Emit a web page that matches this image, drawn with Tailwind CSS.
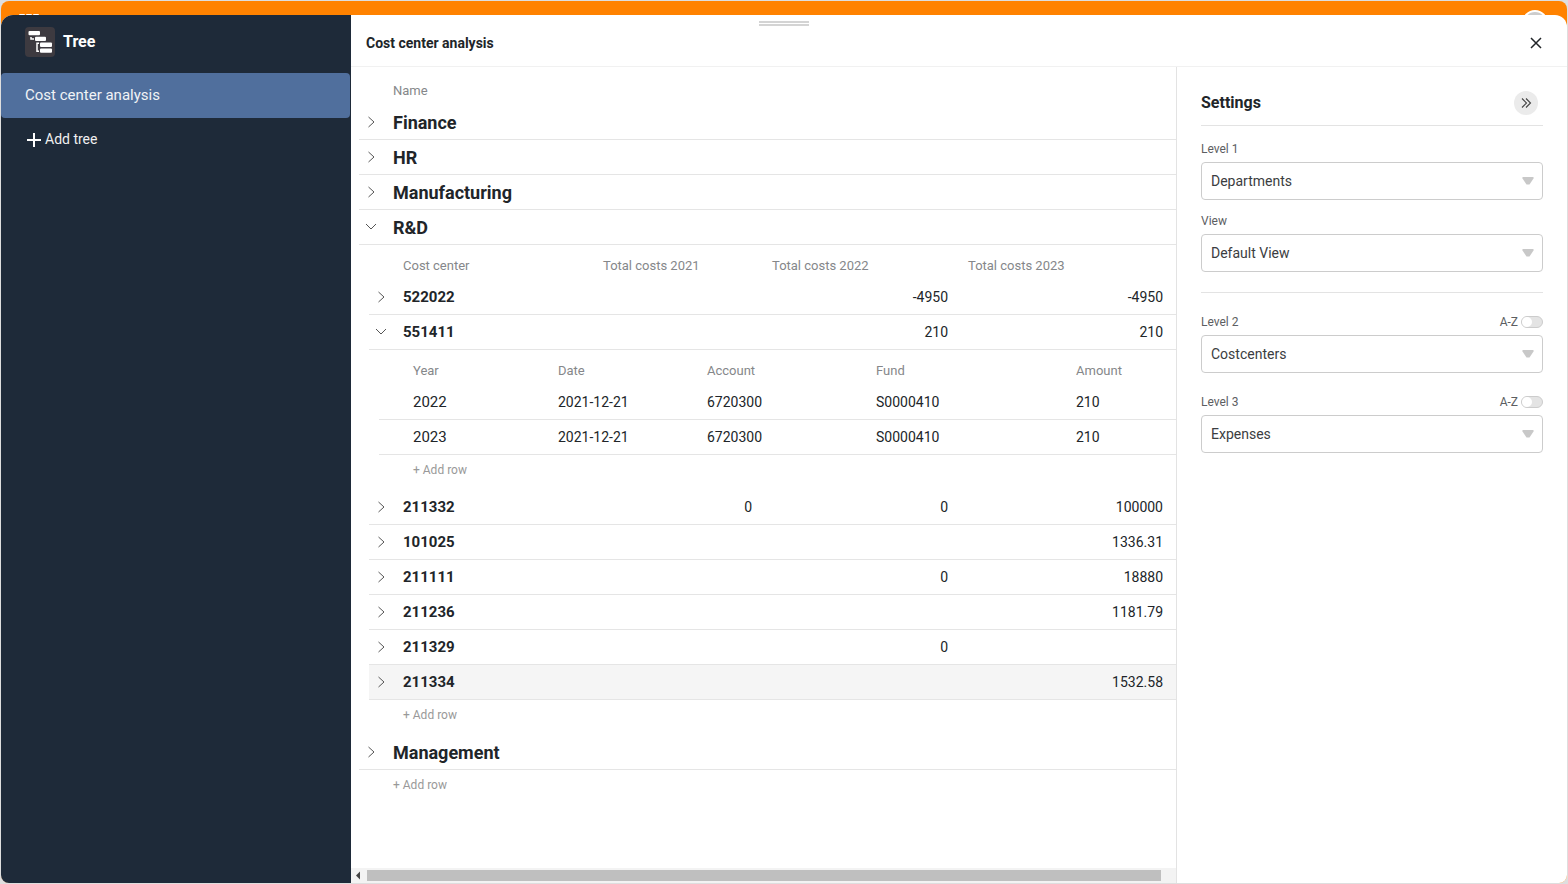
<!DOCTYPE html>
<html lang="en">
<head>
<meta charset="utf-8">
<meta name="viewport" content="width=device-width, initial-scale=1">
<title>Cost center analysis</title>
<script src="https://cdn.jsdelivr.net/npm/@tailwindcss/browser@4"></script>
</head>
<body class="h-screen overflow-hidden bg-[#dedede] p-px font-[Roboto,sans-serif] text-sm text-[#212529]">
<svg class="hidden" aria-hidden="true">
  <symbol id="right" viewBox="0 0 12 12"><path d="M3.500 1l5.500 5-5.500 5" fill="none" stroke="#555" stroke-width="1"/></symbol>
  <symbol id="down" viewBox="0 0 12 12"><path d="M1 3l5 5 5-5" fill="none" stroke="#555" stroke-width="1"/></symbol>
  <symbol id="caret" viewBox="0 0 12 8"><path d="M.5 0h11v1.500L7.500 7.500h-3L.5 1.500z" fill="#c8c8c8"/></symbol>
</svg>
<div class="flex h-full flex-col overflow-hidden rounded-lg bg-[#ff8200]">
  <div class="flex h-[14px] shrink-0 items-start justify-between pr-[19px] pl-[18px]">
    <svg class="mt-[13px] h-5 w-[22px] shrink-0" viewBox="0 0 22 20" fill="#fff" aria-hidden="true"><rect width="6" height="5" rx="1"/><rect x="7" width="6" height="5" rx="1"/><rect x="14" width="6" height="5" rx="1"/></svg>
    <span class="mt-[9px] size-[26px] shrink-0 rounded-full border-2 border-white bg-[#ccc]"></span>
  </div>
  <div class="relative flex min-h-0 flex-1 overflow-hidden rounded-t-xl bg-white">
    <nav class="w-[350px] shrink-0 bg-[#1e2a39] text-white">
      <div class="flex h-[58px] items-start gap-2 pt-3 pl-6">
        <svg class="size-[30px]" viewBox="0 0 30 30" aria-hidden="true">
          <rect width="30" height="30" rx="4" fill="#3d3a40"/>
          <g fill="#fff"><rect x="3.500" y="4" width="11.500" height="4.300" rx="1"/><rect x="10" y="9.700" width="11" height="4.300" rx="1"/><rect x="15" y="15.500" width="12" height="4.500" rx="1"/><rect x="15" y="21.500" width="12" height="4.300" rx="1"/></g>
          <path d="M6 10v2H9M14 16.300h-2v8h2" fill="none" stroke="#fff" stroke-width="1.500"/>
        </svg>
        <h1 class="text-base leading-[30px] font-bold">Tree</h1>
      </div>
      <a href="#" class="mr-px flex h-[45px] items-center rounded bg-[#506f9d] pl-6 text-[15px] text-[#f1f3f6]">Cost center analysis</a>
      <button type="button" class="flex h-[42px] items-center gap-1 pl-6 text-sm text-[#f0f0f0]">
        <svg class="size-4" viewBox="0 0 16 16" aria-hidden="true"><path d="M9 2v14M2 9h14" stroke="#fff" stroke-width="2"/></svg>Add tree
      </button>
    </nav>
    <main class="flex min-w-0 flex-1 flex-col">
      <header class="flex h-[52px] shrink-0 items-center justify-between border-b border-[#f1f1f1] pt-1 pr-[23px] pl-[15px]">
        <h2 class="text-sm font-bold">Cost center analysis</h2>
        <button type="button" aria-label="Close" class="flex size-4 items-center justify-center pt-px"><svg class="size-3" viewBox="0 0 12 12"><path d="M1 1l10 10M11 1L1 11" stroke="#212529" stroke-width="1.500"/></svg></button>
      </header>
      <div class="flex min-h-0 flex-1">
        <section class="flex min-w-0 flex-1 flex-col">
          <div class="min-h-0 flex-1 overflow-hidden pt-[3px] pl-2">
            <table class="w-full table-fixed border-separate border-spacing-0 text-left">
              <colgroup><col class="w-6"><col></colgroup>
              <thead><tr class="h-[35px] text-[13px] text-[#85878a]"><td></td><th class="px-2.5 pt-2 font-normal">Name</th></tr></thead>
              <tbody>
                <tr class="h-[35px]"><td class="border-b border-[#e5e5e5]"><button type="button" aria-label="Expand Finance" class="mx-auto block"><svg class="size-3"><use href="#right"/></svg></button></td><th class="border-b border-[#e5e5e5] px-2.5 pt-[2px] text-lg leading-6 font-bold">Finance</th></tr>
                <tr class="h-[35px]"><td class="border-b border-[#e5e5e5]"><button type="button" aria-label="Expand HR" class="mx-auto block"><svg class="size-3"><use href="#right"/></svg></button></td><th class="border-b border-[#e5e5e5] px-2.5 pt-[2px] text-lg leading-6 font-bold">HR</th></tr>
                <tr class="h-[35px]"><td class="border-b border-[#e5e5e5]"><button type="button" aria-label="Expand Manufacturing" class="mx-auto block"><svg class="size-3"><use href="#right"/></svg></button></td><th class="border-b border-[#e5e5e5] px-2.5 pt-[2px] text-lg leading-6 font-bold">Manufacturing</th></tr>
                <tr class="h-[35px]"><td class="border-b border-[#e5e5e5]"><button type="button" aria-label="Collapse R&amp;D" class="mx-auto block"><svg class="size-3"><use href="#down"/></svg></button></td><th class="border-b border-[#e5e5e5] px-2.5 pt-[2px] text-lg leading-6 font-bold">R&amp;D</th></tr>
                <tr><td colspan="2" class="pl-2.5">
                  <table class="w-full table-fixed border-separate border-spacing-0 text-left">
                    <colgroup><col class="w-6"><col class="w-[200px]"><col class="w-[169px]"><col class="w-[196px]"><col class="w-[215px]"><col></colgroup>
                    <thead><tr class="h-[35px] text-[13px] text-[#85878a]"><td></td><th class="px-2.5 pt-2 font-normal">Cost center</th><th class="px-2.5 pt-2 font-normal">Total costs 2021</th><th class="px-2.5 pt-2 font-normal">Total costs 2022</th><th class="px-2.5 pt-2 font-normal">Total costs 2023</th><td></td></tr></thead>
                    <tbody class="[&_.c]:border-b [&_.c]:border-[#e5e5e5]">
                      <tr class="h-[35px]"><td class="c"><button type="button" aria-label="Expand 522022" class="mx-auto block"><svg class="size-3"><use href="#right"/></svg></button></td><th class="c px-2.5 pt-[2px] text-[15px] font-bold">522022</th><td class="c"></td><td class="c px-2.5 text-right">-4950</td><td class="c px-2.5 text-right">-4950</td><td class="c"></td></tr>
                      <tr class="h-[35px]"><td class="c"><button type="button" aria-label="Collapse 551411" class="mx-auto block"><svg class="size-3"><use href="#down"/></svg></button></td><th class="c px-2.5 pt-[2px] text-[15px] font-bold">551411</th><td class="c"></td><td class="c px-2.5 text-right">210</td><td class="c px-2.5 text-right">210</td><td class="c"></td></tr>
                      <tr><td colspan="6" class="pl-2.5">
                        <table class="w-full table-fixed border-separate border-spacing-0 text-left">
                          <colgroup><col class="w-6"><col class="w-[145px]"><col class="w-[149px]"><col class="w-[169px]"><col class="w-[200px]"><col></colgroup>
                          <thead><tr class="h-[35px] text-[13px] text-[#85878a]"><td></td><th class="px-2.5 pt-2 font-normal">Year</th><th class="px-2.5 pt-2 font-normal">Date</th><th class="px-2.5 pt-2 font-normal">Account</th><th class="px-2.5 pt-2 font-normal">Fund</th><th class="px-2.5 pt-2 font-normal">Amount</th></tr></thead>
                          <tbody>
                            <tr class="h-[35px]"><td class="c"></td><td class="c px-2.5 pt-[2px] text-[15px]">2022</td><td class="c px-2.5">2021-12-21</td><td class="c px-2.5">6720300</td><td class="c px-2.5">S0000410</td><td class="c px-2.5">210</td></tr>
                            <tr class="h-[35px]"><td class="c"></td><td class="c px-2.5 pt-[2px] text-[15px]">2023</td><td class="c px-2.5">2021-12-21</td><td class="c px-2.5">6720300</td><td class="c px-2.5">S0000410</td><td class="c px-2.5">210</td></tr>
                            <tr class="h-[35px]"><td></td><td colspan="5" class="px-2.5 pb-[5px]"><button type="button" class="block text-xs text-[#999]">+ Add row</button></td></tr>
                          </tbody>
                        </table>
                      </td></tr>
                      <tr class="h-[35px]"><td class="c"><button type="button" aria-label="Expand 211332" class="mx-auto block"><svg class="size-3"><use href="#right"/></svg></button></td><th class="c px-2.5 pt-[2px] text-[15px] font-bold">211332</th><td class="c px-2.5 text-right">0</td><td class="c px-2.5 text-right">0</td><td class="c px-2.5 text-right">100000</td><td class="c"></td></tr>
                      <tr class="h-[35px]"><td class="c"><button type="button" aria-label="Expand 101025" class="mx-auto block"><svg class="size-3"><use href="#right"/></svg></button></td><th class="c px-2.5 pt-[2px] text-[15px] font-bold">101025</th><td class="c"></td><td class="c"></td><td class="c px-2.5 text-right">1336.31</td><td class="c"></td></tr>
                      <tr class="h-[35px]"><td class="c"><button type="button" aria-label="Expand 211111" class="mx-auto block"><svg class="size-3"><use href="#right"/></svg></button></td><th class="c px-2.5 pt-[2px] text-[15px] font-bold">211111</th><td class="c"></td><td class="c px-2.5 text-right">0</td><td class="c px-2.5 text-right">18880</td><td class="c"></td></tr>
                      <tr class="h-[35px]"><td class="c"><button type="button" aria-label="Expand 211236" class="mx-auto block"><svg class="size-3"><use href="#right"/></svg></button></td><th class="c px-2.5 pt-[2px] text-[15px] font-bold">211236</th><td class="c"></td><td class="c"></td><td class="c px-2.5 text-right">1181.79</td><td class="c"></td></tr>
                      <tr class="h-[35px]"><td class="c"><button type="button" aria-label="Expand 211329" class="mx-auto block"><svg class="size-3"><use href="#right"/></svg></button></td><th class="c px-2.5 pt-[2px] text-[15px] font-bold">211329</th><td class="c"></td><td class="c px-2.5 text-right">0</td><td class="c"></td><td class="c"></td></tr>
                      <tr class="h-[35px] bg-[#f5f5f5]"><td class="c"><button type="button" aria-label="Expand 211334" class="mx-auto block"><svg class="size-3"><use href="#right"/></svg></button></td><th class="c px-2.5 pt-[2px] text-[15px] font-bold">211334</th><td class="c"></td><td class="c"></td><td class="c px-2.5 text-right">1532.58</td><td class="c"></td></tr>
                      <tr class="h-[35px]"><td></td><td colspan="5" class="px-2.5 pb-[5px]"><button type="button" class="block text-xs text-[#999]">+ Add row</button></td></tr>
                    </tbody>
                  </table>
                </td></tr>
                <tr class="h-[35px]"><td class="border-b border-[#e5e5e5]"><button type="button" aria-label="Expand Management" class="mx-auto block"><svg class="size-3"><use href="#right"/></svg></button></td><th class="border-b border-[#e5e5e5] px-2.5 pt-[2px] text-lg leading-6 font-bold">Management</th></tr>
                <tr class="h-[35px]"><td></td><td class="px-2.5 pb-[5px]"><button type="button" class="block text-xs text-[#999]">+ Add row</button></td></tr>
              </tbody>
            </table>
          </div>
          <div class="flex h-[15px] shrink-0 items-center bg-[#f3f3f3]" aria-hidden="true">
            <svg class="h-[15px] w-4" viewBox="0 0 16 15"><path d="M9 3.500v8L5 7.500z" fill="#444"/></svg>
            <div class="mr-[15px] h-[11px] flex-1 bg-[#bfbfbf]"></div>
          </div>
        </section>
        <aside class="w-[391px] shrink-0 border-l border-[#e3e3e3] px-6">
          <div class="flex h-[59px] items-center justify-between border-b border-[#e3e3e3] pt-[13px]">
            <h3 class="text-base font-bold">Settings</h3>
            <button type="button" aria-label="Collapse settings" class="mr-[5px] flex size-6 items-center justify-center rounded-full bg-[#ebebeb]"><svg class="size-3" viewBox="0 0 12 12"><path d="M2 1.500L6.500 6 2 10.500M6 1.500L10.500 6 6 10.500" fill="none" stroke="#444" stroke-width="1.100"/></svg></button>
          </div>
          <div class="pt-[13px]">
            <label for="level1" class="block h-[23px] pt-[2px] text-xs text-[#5c5e62]">Level 1</label>
            <div class="grid items-center">
              <select id="level1" class="col-start-1 row-start-1 h-[38px] w-full appearance-none rounded border border-[#ccc] bg-white px-[9px] text-sm text-[#3b3d41]"><option>Departments</option></select>
              <svg class="pointer-events-none col-start-1 row-start-1 mr-[9px] h-2 w-3 justify-self-end"><use href="#caret"/></svg>
            </div>
          </div>
          <div class="border-b border-[#e3e3e3] pt-[11px] pb-5">
            <label for="view" class="block h-[23px] pt-[2px] text-xs text-[#5c5e62]">View</label>
            <div class="grid items-center">
              <select id="view" class="col-start-1 row-start-1 h-[38px] w-full appearance-none rounded border border-[#ccc] bg-white px-[9px] text-sm text-[#3b3d41]"><option>Default View</option></select>
              <svg class="pointer-events-none col-start-1 row-start-1 mr-[9px] h-2 w-3 justify-self-end"><use href="#caret"/></svg>
            </div>
          </div>
          <div class="pt-[19px]">
            <div class="flex h-[23px] justify-between pt-[2px] text-xs text-[#5c5e62]">
              <label for="level2">Level 2</label>
              <label class="flex h-4 items-center gap-[3px]">A-Z <input type="checkbox" role="switch" class="h-3 w-[22px] appearance-none rounded-full border border-[#ccc] bg-[#e4e4e4] before:block before:size-2.5 before:rounded-full before:bg-white"></label>
            </div>
            <div class="grid items-center">
              <select id="level2" class="col-start-1 row-start-1 h-[38px] w-full appearance-none rounded border border-[#ccc] bg-white px-[9px] text-sm text-[#3b3d41]"><option>Costcenters</option></select>
              <svg class="pointer-events-none col-start-1 row-start-1 mr-[9px] h-2 w-3 justify-self-end"><use href="#caret"/></svg>
            </div>
          </div>
          <div class="pt-[19px]">
            <div class="flex h-[23px] justify-between pt-[2px] text-xs text-[#5c5e62]">
              <label for="level3">Level 3</label>
              <label class="flex h-4 items-center gap-[3px]">A-Z <input type="checkbox" role="switch" class="h-3 w-[22px] appearance-none rounded-full border border-[#ccc] bg-[#e4e4e4] before:block before:size-2.5 before:rounded-full before:bg-white"></label>
            </div>
            <div class="grid items-center">
              <select id="level3" class="col-start-1 row-start-1 h-[38px] w-full appearance-none rounded border border-[#ccc] bg-white px-[9px] text-sm text-[#3b3d41]"><option>Expenses</option></select>
              <svg class="pointer-events-none col-start-1 row-start-1 mr-[9px] h-2 w-3 justify-self-end"><use href="#caret"/></svg>
            </div>
          </div>
        </aside>
      </div>
    </main>
    <div class="absolute inset-x-0 top-[6px] mx-auto h-[5px] w-[50px] border-y-2 border-[#d4d4d4]" aria-hidden="true"></div>
  </div>
</div>
</body>
</html>
